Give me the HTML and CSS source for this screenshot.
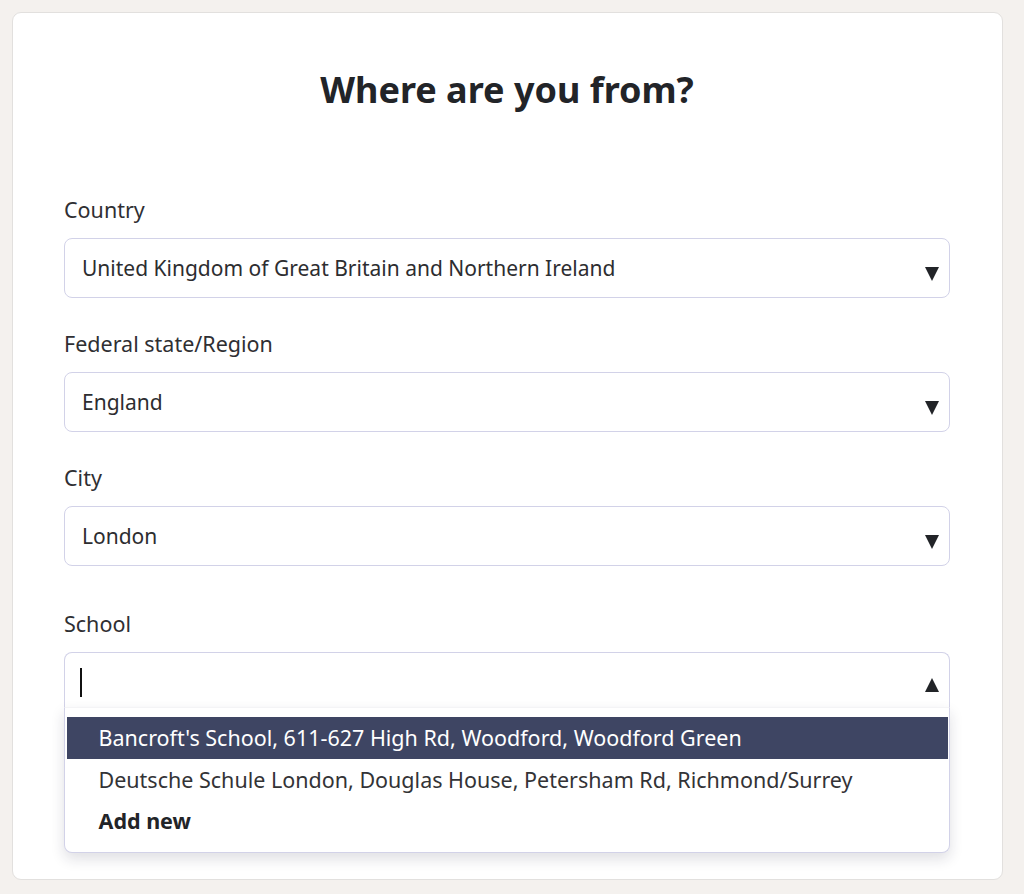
FILE: index.html
```html
<!DOCTYPE html>
<html lang="en">
<head>
<meta charset="utf-8">
<title>Where are you from?</title>
<link rel="stylesheet" href="styles.css">
</head>
<body>
<main class="card">
  <h1 class="title">Where are you from?</h1>
  <form class="form">
    <div class="field">
      <label class="label">Country</label>
      <div class="select"><span class="value">United Kingdom of Great Britain and Northern Ireland</span><span class="arrow down"></span></div>
    </div>
    <div class="field">
      <label class="label">Federal state/Region</label>
      <div class="select"><span class="value">England</span><span class="arrow down"></span></div>
    </div>
    <div class="field">
      <label class="label">City</label>
      <div class="select"><span class="value">London</span><span class="arrow down"></span></div>
    </div>
    <div class="field school">
      <label class="label">School</label>
      <div class="combo">
        <div class="select open"><span class="caret"></span><span class="arrow up"></span></div>
        <ul class="menu">
          <li class="option active">Bancroft's School, 611-627 High Rd, Woodford, Woodford Green</li>
          <li class="option">Deutsche Schule London, Douglas House, Petersham Rd, Richmond/Surrey</li>
          <li class="option add">Add new</li>
        </ul>
      </div>
    </div>
  </form>
</main>
</body>
</html>
```
FILE: styles.css
```css
* { box-sizing: border-box; }
html, body { margin: 0; }
body {
  background: #f4f1ee;
  padding: 12px 21px 14px 12px;
  font-family: "Noto Sans", "Open Sans", sans-serif;
  color: #2a2a2e;
}
.card {
  background: #fff;
  border: 1px solid #e2e0de;
  border-radius: 9px;
  height: 868px;
  padding: 47px 52px 0 51px;
}
.title {
  margin: 0;
  text-align: center;
  font-size: 36px;
  font-weight: 700;
  line-height: 60px;
  color: #222428;
}
.form { margin-top: 76px; }
.field { margin-bottom: 32px; }
.field.school { margin-top: 44px; }
.label {
  display: block;
  font-size: 21.5px;
  line-height: 28px;
  color: #2f2f33;
  margin-bottom: 14px;
}
.select {
  height: 60px;
  border: 1.5px solid #d2d2e8;
  border-radius: 8px;
  display: flex;
  align-items: center;
  padding: 0 10px 0 17px;
  font-size: 21px;
  color: #2d2d30;
}
.value { flex: 1; }
.arrow {
  margin-left: auto;
  width: 0; height: 0;
  border-left: 7.5px solid transparent;
  border-right: 7.5px solid transparent;
}
.arrow.down { border-top: 14px solid #222428; margin-top: 12px; }
.arrow.up { border-bottom: 14px solid #222428; margin-top: 6px; }
.combo { position: relative; }
.select.open {
  border-bottom-color: transparent;
  border-radius: 8px 8px 0 0;
  padding-left: 15px;
}
.caret {
  width: 2px;
  height: 29px;
  background: #111;
}
.menu {
  position: absolute;
  left: 0; right: 0;
  top: 55px;
  margin: 0;
  list-style: none;
  background: #fff;
  border: 1.5px solid #d2d2e8;
  border-top: 1px solid #f4f4f6;
  border-radius: 0 0 8px 8px;
  box-shadow: 0 6px 14px rgba(30, 30, 60, 0.14);
  padding: 9px 1.5px 11px;
}
.option {
  height: 41px;
  line-height: 41px;
  padding-left: 32px;
  font-size: 21.5px;
  color: #333336;
}
.option.active {
  background: #3e4563;
  color: #fff;
  height: 42px;
  line-height: 42px;
}
.option.add { font-weight: 700; color: #222428; }
```
